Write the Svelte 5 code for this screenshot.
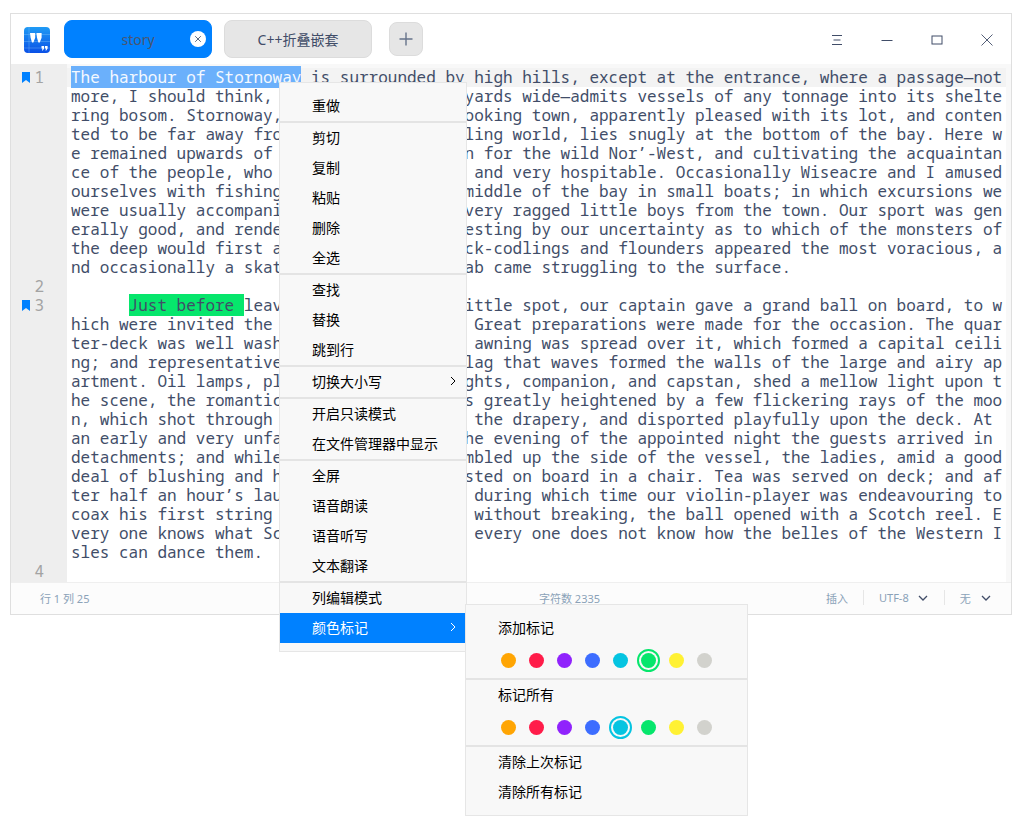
<script>
  // logical line number and bookmark sit on the first visual row of each line
  const rows = [
    { num: 1, mark: true, current: true, parts: [['The harbour of Stornoway', 'sel'], [' is surrounded by high hills, except at the entrance, where a passage—not', '']] },
    'more, I should think, than three hundred yards wide—admits vessels of any tonnage into its shelte',
    'ring bosom. Stornoway, a clean, thrifty-looking town, apparently pleased with its lot, and conten',
    'ted to be far away from the din of a bustling world, lies snugly at the bottom of the bay. Here w',
    'e remained upwards of a week; we waited in for the wild Nor’-West, and cultivating the acquaintan',
    'ce of the people, who are warm, generous, and very hospitable. Occasionally Wiseacre and I amused',
    'ourselves with fishing excursions in the middle of the bay in small boats; in which excursions we',
    'were usually accompanied by two or three very ragged little boys from the town. Our sport was gen',
    'erally good, and rendered much more interesting by our uncertainty as to which of the monsters of',
    'the deep would first assail our hooks. Rock-codlings and flounders appeared the most voracious, a',
    'nd occasionally a skate or a huge ugly crab came struggling to the surface.',
    { num: 2, parts: [] },
    { num: 3, mark: true, parts: [['      ', ''], ['Just before ', 'green'], ['leaving this pleasant little spot, our captain gave a grand ball on board, to w', '']] },
    'hich were invited the gentry of the town. Great preparations were made for the occasion. The quar',
    'ter-deck was well washed, and a very wide awning was spread over it, which formed a capital ceili',
    'ng; and representatives of each kind of flag that waves formed the walls of the large and airy ap',
    'artment. Oil lamps, placed over the skylights, companion, and capstan, shed a mellow light upon t',
    'he scene, the romantic effect of which was greatly heightened by a few flickering rays of the moo',
    'n, which shot through openings in the old the drapery, and disported playfully upon the deck. At',
    'an early and very unfavourable time, on the evening of the appointed night the guests arrived in',
    'detachments; and while the lads soon scrambled up the side of the vessel, the ladies, amid a good',
    'deal of blushing and hesitation, were hoisted on board in a chair. Tea was served on deck; and af',
    'ter half an hour’s laughter and chatting, during which time our violin-player was endeavouring to',
    'coax his first string to play a jolly air without breaking, the ball opened with a Scotch reel. E',
    'very one knows what Scotch lasses can do; every one does not know how the belles of the Western I',
    'sles can dance them.',
    { num: 4, parts: [] }
  ].map((r) => (typeof r === 'string' ? { parts: [[r, '']] } : r));

  const menu = [
    ['重做'],
    ['剪切', '复制', '粘贴', '删除', '全选'],
    ['查找', '替换', '跳到行'],
    ['切换大小写>'],
    ['开启只读模式', '在文件管理器中显示'],
    ['全屏', '语音朗读', '语音听写', '文本翻译'],
    ['列编辑模式', '颜色标记>!']
  ];

  const colors = ['#ffa503', '#ff1c49', '#9023fc', '#3d6dff', '#05c4e1', '#06e66c', '#fff133', '#d2d2cd'];
</script>

<div class="page">
  <div class="window">
    <header class="titlebar">
      <svg class="logo" viewBox="0 0 26 26" width="26" height="26">
        <defs>
          <linearGradient id="lg" x1="0" y1="0" x2="0" y2="1">
            <stop offset="0" stop-color="#1f9bf5" />
            <stop offset="1" stop-color="#0a50e6" />
          </linearGradient>
        </defs>
        <rect width="26" height="26" rx="4" fill="url(#lg)" />
        <path d="M0 7.5h26M0 14.5h26M0 21h26M5 0v26" stroke="#8cc8fa" stroke-width=".6" opacity=".6" />
        <path d="M6 6h5.2v4.8L9.4 15.5H8L6.6 10.8zM12.4 6h5.2v4.8l-1.8 4.7h-1.4L13 10.8z" fill="#fff" />
        <path d="M17.5 19h2.6v2.4l-1.3 2h-.8l.5-2h-1zM21 19h2.6v2.4l-1.3 2h-.8l.5-2h-1z" fill="#fff" />
      </svg>
      <div class="tab active">
        <span>story</span>
        <i class="tab-close">
          <svg viewBox="0 0 8 8" width="8" height="8"><path d="M1.2 1.2l5.6 5.6M6.8 1.2L1.2 6.8" stroke="#5c6a80" stroke-width="1" /></svg>
        </i>
      </div>
      <div class="tab"><span>C++折叠嵌套</span></div>
      <button class="add" aria-label="add">
        <svg viewBox="0 0 14 14" width="14" height="14"><path d="M7 .5v13M.5 7h13" stroke="#66738a" stroke-width="1.4" /></svg>
      </button>
      <div class="controls">
        <span><svg viewBox="0 0 12 12" width="12" height="12"><path d="M1 1.5h10M2.5 6h7M1 10.5h10" stroke="#414d68" stroke-width="1" /></svg></span>
        <span><svg viewBox="0 0 12 12" width="12" height="12"><path d="M.5 6.5h11" stroke="#414d68" stroke-width="1" /></svg></span>
        <span><svg viewBox="0 0 12 12" width="12" height="12"><rect x="1" y="2" width="10" height="8" fill="none" stroke="#414d68" stroke-width="1" /></svg></span>
        <span><svg viewBox="0 0 12 12" width="12" height="12"><path d="M.5.5l11 11M11.5.5l-11 11" stroke="#414d68" stroke-width=".9" /></svg></span>
      </div>
    </header>

    <div class="editor">
      <div class="gutter">
        {#each rows as row}
          <div class="gutter-row">
            {#if row.mark}
              <svg class="bookmark" viewBox="0 0 8 11" width="8" height="11"><path d="M0 0h8v11L4 8 0 11z" fill="#0081ff" /></svg>
            {/if}
            {#if row.num}<span>{row.num}</span>{/if}
          </div>
        {/each}
      </div>
      <div class="text">
        {#each rows as row}
          <div class="line" class:current={row.current}>{#each row.parts as part}<span class={part[1]}>{part[0]}</span>{/each}</div>
        {/each}
      </div>
      <div class="scroll"></div>
    </div>

    <footer class="status">
      <span class="pos">行 1 列 25</span>
      <span class="count">字符数 2335</span>
      <span class="mode">插入</span>
      <i class="divider"></i>
      <span class="select enc">UTF-8
        <svg viewBox="0 0 10 6" width="10" height="6"><path d="M1 1l4 4 4-4" fill="none" stroke="#414d68" stroke-width="1.3" /></svg>
      </span>
      <i class="divider"></i>
      <span class="select hl">无
        <svg viewBox="0 0 10 6" width="10" height="6"><path d="M1 1l4 4 4-4" fill="none" stroke="#414d68" stroke-width="1.3" /></svg>
      </span>
    </footer>
  </div>

  <div class="menu">
    {#each menu as group, g}
      {#if g > 0}<div class="sep"></div>{/if}
      {#each group as item}
        <div class="item" class:on={item.endsWith('!')}>
          <span>{item.replace(/>!?$/, '')}</span>
          {#if item.includes('>')}
            <svg viewBox="0 0 6 10" width="6" height="10"><path d="M1 1l4 4-4 4" fill="none" stroke="currentColor" stroke-width="1" /></svg>
          {/if}
        </div>
      {/each}
    {/each}
  </div>

  <div class="submenu">
    <div class="sub-label first">添加标记</div>
    <div class="dots">
      {#each colors as c, i}
        <i class="dot" class:ring={i === 5} style="--c:{c}"></i>
      {/each}
    </div>
    <div class="sep"></div>
    <div class="sub-label">标记所有</div>
    <div class="dots">
      {#each colors as c, i}
        <i class="dot" class:ring={i === 4} style="--c:{c}"></i>
      {/each}
    </div>
    <div class="sep"></div>
    <div class="sub-label">清除上次标记</div>
    <div class="sub-label">清除所有标记</div>
  </div>
</div>

<style>
  :global(body) {
    background: #fff;
  }

  .page {
    position: relative;
    width: 1033px;
    height: 826px;
    padding: 13px 0 0 10px;
    box-sizing: border-box;
    font-family: "Noto Sans", "Noto Sans CJK SC", sans-serif;
    overflow: hidden;
  }

  .window {
    width: 1002px;
    height: 602px;
    box-sizing: border-box;
    border: 1px solid #dfdfdf;
    display: flex;
    flex-direction: column;
    background: #fff;
  }

  .titlebar {
    height: 50px;
    flex: none;
    display: flex;
    align-items: center;
    padding-left: 13px;
  }

  .logo {
    margin-right: 14px;
    margin-top: 1px;
  }

  .tab {
    position: relative;
    width: 148px;
    height: 38px;
    box-sizing: border-box;
    margin-right: 12px;
    border: 1px solid #dcdcdc;
    border-radius: 8px;
    background: #e6e6e6;
    color: #414d68;
    font-size: 14px;
    display: flex;
    align-items: center;
    justify-content: center;
  }

  .tab.active {
    background: #0081ff;
    border-color: #0081ff;
    color: #4a5670;
  }

  .tab-close {
    position: absolute;
    right: 5px;
    top: 10px;
    width: 16px;
    height: 16px;
    border-radius: 50%;
    background: #fff;
    display: flex;
    align-items: center;
    justify-content: center;
  }

  .add {
    width: 34px;
    height: 34px;
    margin-left: 5px;
    padding: 0;
    border: 1px solid #dcdcdc;
    border-radius: 8px;
    background: #e6e6e6;
    display: flex;
    align-items: center;
    justify-content: center;
  }

  .controls {
    margin-left: auto;
    margin-right: -1px;
    display: flex;
  }

  .controls span {
    width: 50px;
    height: 50px;
    margin-top: 2px;
    display: flex;
    align-items: center;
    justify-content: center;
  }

  .editor {
    flex: 1;
    min-height: 0;
    display: flex;
    overflow: hidden;
    background: #fff;
  }

  .gutter {
    width: 56px;
    flex: none;
    padding-top: 4px;
    background: #eeeeee;
  }

  .gutter-row {
    position: relative;
    height: 19px;
    padding-right: 23px;
    text-align: right;
    font: 16px/19px "Noto Sans Mono", "DejaVu Sans Mono", monospace;
    color: #a3a3a3;
  }

  .bookmark {
    position: absolute;
    left: 11px;
    top: 4px;
  }

  .text {
    flex: 1;
    min-width: 0;
    padding-top: 4px;
    background: linear-gradient(#f8f8f8 4px, #fff 4px);
    font: 16px/19px "Noto Sans Mono", "DejaVu Sans Mono", monospace;
    color: #414d68;
  }

  .line {
    height: 19px;
    padding-left: 4px;
    white-space: pre;
  }

  .line.current {
    background: #f3f3f3;
  }

  .sel {
    background: #6bb0fb;
    color: #f4f9ff;
  }

  .green {
    background: #06e66c;
  }

  .scroll {
    width: 5px;
    flex: none;
    background: #f8f8f8;
  }

  .status {
    height: 32px;
    flex: none;
    box-sizing: border-box;
    padding-bottom: 2px;
    border-top: 1px solid #efefef;
    background: #fcfcfc;
    display: flex;
    align-items: center;
    font-size: 11px;
    color: #8ba2b8;
  }

  .pos {
    margin-left: 29px;
    width: 499px;
  }

  .count {
    width: 287px;
  }

  .mode {
    width: 22px;
  }

  .divider {
    width: 1px;
    height: 15px;
    margin-left: 15px;
    background: #e6e6e6;
  }

  .select {
    display: flex;
    align-items: center;
  }

  .select svg {
    margin-left: 9px;
  }

  .enc {
    margin-left: 15px;
    margin-right: 1px;
  }

  .hl {
    margin-left: 15px;
  }

  .hl svg {
    margin-left: 10px;
  }

  .menu,
  .submenu {
    position: absolute;
    box-sizing: border-box;
    background: #f8f8f8;
    border: 1px solid #e6e6e6;
    color: #000;
    font-size: 14px;
  }

  .menu {
    left: 279px;
    top: 82px;
    width: 188px;
    height: 570px;
    padding: 8px 0;
  }

  .sep {
    height: 2px;
    background: #e4e4e4;
  }

  .item {
    height: 30px;
    box-sizing: border-box;
    padding: 0 10px 2px 32px;
    display: flex;
    align-items: center;
    justify-content: space-between;
  }

  .item.on {
    background: #0081ff;
    color: #fff;
  }

  .submenu {
    left: 465px;
    top: 604px;
    width: 283px;
    height: 212px;
  }

  .sub-label {
    height: 30px;
    box-sizing: border-box;
    padding: 0 0 2px 32px;
    display: flex;
    align-items: center;
  }

  .sub-label.first {
    margin-top: 8px;
  }

  .dots {
    height: 35px;
    padding-left: 35px;
    display: flex;
    align-items: center;
    gap: 13px;
  }

  .dot {
    position: relative;
    width: 15px;
    height: 15px;
    border-radius: 50%;
    background: var(--c);
  }

  .dot.ring::after {
    content: "";
    position: absolute;
    inset: -4px;
    border: 2px solid var(--c);
    border-radius: 50%;
  }
</style>
